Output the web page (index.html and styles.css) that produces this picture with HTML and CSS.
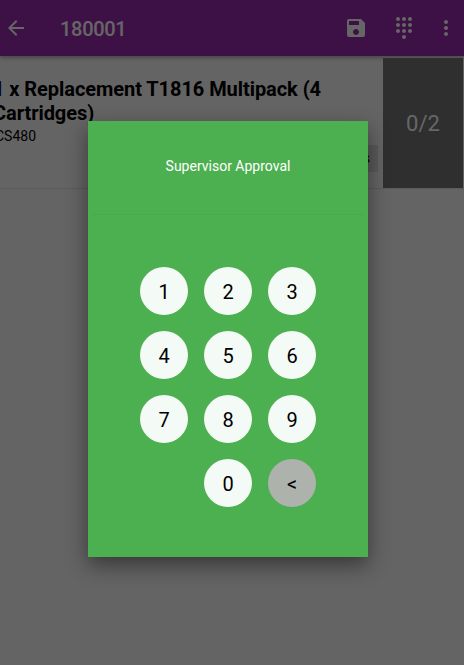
FILE: index.html
```html
<!DOCTYPE html>
<html>
<head>
    <meta charset="UTF-8">
    <title>Supervisor Approval</title>
    <link rel="stylesheet" href="styles.css">
</head>
<body>
    <div class="app">
        <header class="app-bar">
            <svg class="back-icon" width="24" height="24" viewBox="0 0 24 24"><path d="M20 11H7.83l5.59-5.59L12 4l-8 8 8 8 1.41-1.41L7.83 13H20v-2z"/></svg>
            <div class="app-title">180001</div>
            <svg class="save-icon" width="24" height="24" viewBox="0 0 24 24"><path d="M17 3H5c-1.11 0-2 .9-2 2v14c0 1.1.89 2 2 2h14c1.1 0 2-.9 2-2V7l-4-4zm-5 16c-1.66 0-3-1.34-3-3s1.34-3 3-3 3 1.34 3 3-1.34 3-3 3zm3-10H5V5h10v4z"/></svg>
            <svg class="dial-icon" width="24" height="24" viewBox="0 0 24 24"><path d="M12 19c-1.1 0-2 .9-2 2s.9 2 2 2 2-.9 2-2-.9-2-2-2zM6 1c-1.1 0-2 .9-2 2s.9 2 2 2 2-.9 2-2-.9-2-2-2zm0 6c-1.1 0-2 .9-2 2s.9 2 2 2 2-.9 2-2-.9-2-2-2zm0 6c-1.1 0-2 .9-2 2s.9 2 2 2 2-.9 2-2-.9-2-2-2zm12-8c1.1 0 2-.9 2-2s-.9-2-2-2-2 .9-2 2 .9 2 2 2zm-6 8c-1.1 0-2 .9-2 2s.9 2 2 2 2-.9 2-2-.9-2-2-2zm6 0c-1.1 0-2 .9-2 2s.9 2 2 2 2-.9 2-2-.9-2-2-2zm0-6c-1.1 0-2 .9-2 2s.9 2 2 2 2-.9 2-2-.9-2-2-2zm-6 0c-1.1 0-2 .9-2 2s.9 2 2 2 2-.9 2-2-.9-2-2-2zm0-6c-1.1 0-2 .9-2 2s.9 2 2 2 2-.9 2-2-.9-2-2-2z"/></svg>
            <svg class="more-icon" width="24" height="24" viewBox="0 0 24 24"><path d="M12 8c1.1 0 2-.9 2-2s-.9-2-2-2-2 .9-2 2 .9 2 2 2zm0 2c-1.1 0-2 .9-2 2s.9 2 2 2 2-.9 2-2-.9-2-2-2zm0 6c-1.1 0-2 .9-2 2s.9 2 2 2 2-.9 2-2-.9-2-2-2z"/></svg>
        </header>

        <div class="item-row">
            <div class="item-info">
                <div class="item-name">1 x Replacement T1816 Multipack (4 Cartridges)</div>
                <div class="item-code">CS480</div>
                <div class="item-action">s</div>
            </div>
            <div class="item-count">0/2</div>
        </div>
    </div>

    <div class="scrim">
        <div class="dialog">
            <div class="dialog-title">Supervisor Approval</div>
            <div class="keypad">
                <button class="key">1</button>
                <button class="key">2</button>
                <button class="key">3</button>
                <button class="key">4</button>
                <button class="key">5</button>
                <button class="key">6</button>
                <button class="key">7</button>
                <button class="key">8</button>
                <button class="key">9</button>
                <button class="key key-zero">0</button>
                <button class="key key-back">&lt;</button>
            </div>
        </div>
    </div>
</body>
</html>
```

FILE: styles.css
```css
html, body {
    margin: 0;
    height: 100%;
    overflow: hidden;
}

body {
    font-family: Roboto, "Liberation Sans", sans-serif;
    background-color: #fafafa;
}

.app {
    height: 665px;
    overflow: hidden;
}

.app-bar {
    display: flex;
    align-items: center;
    height: 56px;
    background-color: #9c2bb0;
    box-shadow: 0 2px 4px rgba(0, 0, 0, 0.3);
    color: #fff;
}

.app-bar svg {
    fill: #fff;
    flex: none;
}

.back-icon {
    margin-left: 4px;
}

.app-title {
    flex: 1;
    margin-left: 32px;
    padding-top: 2px;
    font-size: 20px;
    font-weight: 500;
    letter-spacing: -0.3px;
}

.dial-icon {
    margin-left: 24px;
}

.more-icon {
    margin-left: 18px;
    margin-right: 6px;
}

.item-row {
    display: flex;
    box-sizing: border-box;
    height: 133px;
    border-bottom: 1px solid #e2e2e2;
}

.item-info {
    flex: 1;
    min-width: 0;
    padding-top: 21px;
    position: relative;
}

.item-name {
    margin-left: -7px;
    width: 372px;
    font-size: 20px;
    line-height: 24px;
    font-weight: 700;
    letter-spacing: -0.06px;
    color: #000;
}

.item-code {
    margin-left: -5px;
    margin-top: 3px;
    font-size: 14px;
    color: #000;
}

.item-action {
    position: absolute;
    right: 5px;
    top: 89px;
    width: 60px;
    height: 27px;
    box-sizing: border-box;
    padding-right: 8px;
    background-color: #e0e0e0;
    font-size: 14px;
    line-height: 27px;
    text-align: right;
}

.item-count {
    flex: none;
    width: 80px;
    margin: 2px 1px 0 0;
    background-color: #757575;
    color: #fff;
    font-size: 22px;
    display: flex;
    align-items: center;
    justify-content: center;
}

.scrim {
    position: absolute;
    inset: 0;
    display: flex;
    justify-content: center;
    padding-right: 8px;
    background-color: rgba(0, 0, 0, 0.6);
}

.dialog {
    align-self: flex-start;
    width: 280px;
    height: 436px;
    margin-top: 121px;
    background-color: #4caf50;
    box-shadow: 0 8px 20px rgba(0, 0, 0, 0.45);
}

.dialog-title {
    height: 94px;
    box-sizing: border-box;
    padding-top: 36px;
    margin: 0 4px;
    border-bottom: 1px solid #4aa94e;
    text-align: center;
    font-size: 14px;
    line-height: 18px;
    color: #fff;
}

.keypad {
    display: grid;
    grid-template-columns: repeat(3, 48px);
    gap: 16px;
    justify-content: center;
    margin-top: 52px;
}

.key {
    width: 48px;
    height: 48px;
    padding: 2px 0 0;
    border: none;
    border-radius: 50%;
    background-color: #f4faf5;
    color: #000;
    font-family: inherit;
    font-size: 20px;
}

.key-zero {
    grid-column: 2;
}

.key-back {
    background-color: #adb2ad;
}
```
